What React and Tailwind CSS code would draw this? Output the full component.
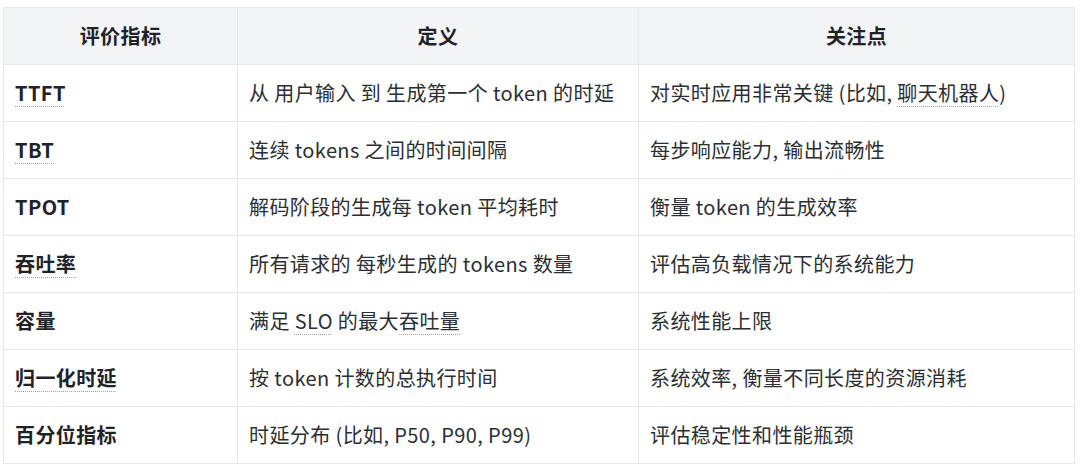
const rows = [
  {
    name: <Dot>TTFT</Dot>,
    def: "从 用户输入 到 生成第一个 token 的时延",
    focus: (
      <>
        对实时应用非常关键 (比如, <Dot>聊天机器人</Dot>)
      </>
    ),
  },
  { name: <Dot>TBT</Dot>, def: "连续 tokens 之间的时间间隔", focus: "每步响应能力, 输出流畅性" },
  { name: "TPOT", def: "解码阶段的生成每 token 平均耗时", focus: "衡量 token 的生成效率" },
  { name: <Dot>吞吐率</Dot>, def: "所有请求的 每秒生成的 tokens 数量", focus: "评估高负载情况下的系统能力" },
  {
    name: "容量",
    def: (
      <>
        满足 <Dot>SLO</Dot> 的最大<Dot>吞吐量</Dot>
      </>
    ),
    focus: "系统性能上限",
  },
  { name: <Dot>归一化时延</Dot>, def: "按 token 计数的总执行时间", focus: "系统效率, 衡量不同长度的资源消耗" },
  { name: "百分位指标", def: "时延分布 (比如, P50, P90, P99)", focus: "评估稳定性和性能瓶颈" },
];

function Dot({ children }) {
  return (
    <span className="underline decoration-dotted decoration-[#9ca3af] decoration-1 underline-offset-[5px]">
      {children}
    </span>
  );
}

export default function App() {
  return (
    <div
      className="w-[1080px] h-[471px] bg-white pt-[7px] pl-[3px]"
      style={{ fontFamily: '"Noto Sans CJK SC", "Noto Sans", sans-serif' }}
    >
      <table className="table-fixed border-collapse w-[1071px] text-[20px] tracking-[0.4px] text-[#24292f]">
        <colgroup>
          <col className="w-[234px]" />
          <col className="w-[401px]" />
          <col className="w-[436px]" />
        </colgroup>
        <thead>
          <tr className="h-[57px] bg-[#f3f4f6]">
            {["评价指标", "定义", "关注点"].map((h) => (
              <th key={h} className="border border-[#e5e7eb] font-bold text-center text-[#1f2328]">
                {h}
              </th>
            ))}
          </tr>
        </thead>
        <tbody>
          {rows.map((r, i) => (
            <tr key={i} className="h-[57px]">
              <td className="border border-[#e5e7eb] px-[11px] font-bold text-[#1f2328]">{r.name}</td>
              <td className="border border-[#e5e7eb] px-[11px] text-[#2b2f33]">{r.def}</td>
              <td className="border border-[#e5e7eb] px-[11px] text-[#2b2f33]">{r.focus}</td>
            </tr>
          ))}
        </tbody>
      </table>
    </div>
  );
}
